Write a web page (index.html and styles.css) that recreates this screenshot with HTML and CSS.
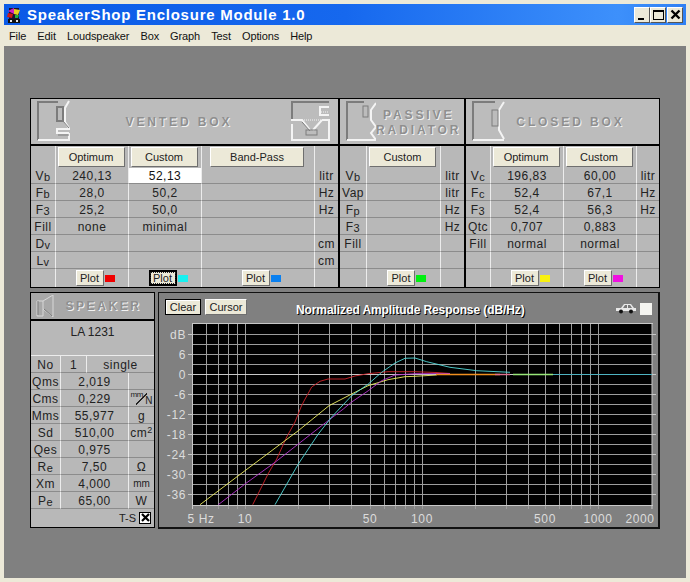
FILE: index.html
```html
<!DOCTYPE html>
<html>
<head>
    <meta charset="utf-8">
    <title>SpeakerShop Enclosure Module 1.0</title>
    <link rel="stylesheet" href="styles.css">
</head>
<body>
<div class="window">
    <div class="titlebar">
        <svg class="app-icon" width="16" height="16" viewBox="0 0 16 16">
            <rect x="3" y="1" width="10" height="11" fill="#1a1030"/>
            <path d="M2 4 L8 1 L8 7 Z" fill="#d020c0"/>
            <path d="M8 2 L14 3 L12 8 L8 7 Z" fill="#e8d020"/>
            <path d="M2 6 L7 7 L6 11 L1 10 Z" fill="#d01818"/>
            <path d="M9 8 L13 8 L12 11 L9 11 Z" fill="#20b040"/>
            <rect x="2" y="12" width="12" height="4" fill="#101010"/>
            <path d="M4 13 h2 v2 h-2 Z M10 13 h2 v2 h-2 Z" fill="#e8e8e8"/>
        </svg>
        <span class="title-text">SpeakerShop Enclosure Module 1.0</span>
        <div class="win-buttons">
            <div class="win-btn"><span class="glyph-min"></span></div>
            <div class="win-btn"><span class="glyph-max"></span></div>
            <div class="win-btn win-close">
                <svg width="11" height="11" viewBox="0 0 11 11"><path d="M1.5 1.5 L9.5 9.5 M9.5 1.5 L1.5 9.5" stroke="#000" stroke-width="2.4"/></svg>
            </div>
        </div>
    </div>
    <div class="menubar">
        <span>File</span><span>Edit</span><span>Loudspeaker</span><span>Box</span><span>Graph</span><span>Test</span><span>Options</span><span>Help</span>
    </div>

    <div class="client">
        <div class="boxes">
            <!-- vented -->
            <div class="box box-vented">
                <div class="box-head">
                    <svg class="head-icon" width="45" height="46" viewBox="0 0 45 46">
                        <path d="M7 41 V3 H27" class="ln-dark"/>
                        <path d="M7 41 H38 V34 M38 2 L34 9 V23 L38 29 V30 H26 V34 H38" class="ln-white"/>
                        <rect x="26" y="8" width="6" height="14" class="ln-dark"/>
                        <path d="M32 22 L38 29 M27 36 H38" class="ln-dark-thin"/>
                    </svg>
                    <div class="head-label label-vented">VENTED BOX</div>
                    <svg class="head-icon" width="50" height="46" viewBox="0 0 50 46">
                        <path d="M4 20 V3 H41" class="ln-dark"/>
                        <path d="M3 21 H14 L22 31 M34 21 L25 31 M34 21 H41 V41 H4 V25 M41 8 H32 V16 H41" class="ln-white"/>
                        <path d="M14 23 L22 32" class="ln-dark-thin"/>
                        <path d="M14 21 H34 M33 13 H41" class="ln-dots"/>
                        <rect x="18" y="31" width="11" height="5" class="ln-dark-thin"/>
                    </svg>
                </div>
                <div class="tbl tbl-vented">
                    <div class="c top"></div><div class="c top"><button class="btn btn-wide">Optimum</button></div><div class="c top"><button class="btn btn-wide">Custom</button></div><div class="c top"><button class="btn btn-band">Band-Pass</button></div><div class="c top"></div>
                    <div class="c">V<small>b</small></div><div class="c">240,13</div><div class="c c-input">52,13</div><div class="c"></div><div class="c">litr</div>
                    <div class="c">F<small>b</small></div><div class="c">28,0</div><div class="c">50,2</div><div class="c"></div><div class="c">Hz</div>
                    <div class="c">F<small>3</small></div><div class="c">25,2</div><div class="c">50,0</div><div class="c"></div><div class="c">Hz</div>
                    <div class="c">Fill</div><div class="c">none</div><div class="c">minimal</div><div class="c"></div><div class="c"></div>
                    <div class="c">D<small>v</small></div><div class="c"></div><div class="c"></div><div class="c"></div><div class="c">cm</div>
                    <div class="c">L<small>v</small></div><div class="c"></div><div class="c"></div><div class="c"></div><div class="c">cm</div>
                    <div class="c end"></div>
                    <div class="c end"><button class="btn btn-plot">Plot</button><span class="swatch sw-red"></span></div>
                    <div class="c end"><button class="btn btn-plot btn-focus"><span>Plot</span></button><span class="swatch sw-cyan"></span></div>
                    <div class="c end"><button class="btn btn-plot">Plot</button><span class="swatch sw-blue"></span></div>
                    <div class="c end"></div>
                </div>
            </div>

            <!-- passive radiator -->
            <div class="box box-passive">
                <div class="box-head">
                    <svg class="head-icon" width="36" height="46" viewBox="0 0 36 46">
                        <path d="M7 41 V3 H24" class="ln-dark"/>
                        <path d="M7 41 H36 L31 34 L36 28 L31 21 V11 L36 4" class="ln-white"/>
                        <rect x="23" y="7" width="5" height="11" class="ln-dark-thin"/>
                    </svg>
                    <div class="head-label head-two">PASSIVE<br>RADIATOR</div>
                </div>
                <div class="tbl tbl-passive">
                    <div class="c top"></div><div class="c top"><button class="btn btn-wide">Custom</button></div><div class="c top"></div>
                    <div class="c">V<small>b</small></div><div class="c"></div><div class="c">litr</div>
                    <div class="c">Vap</div><div class="c"></div><div class="c">litr</div>
                    <div class="c">F<small>p</small></div><div class="c"></div><div class="c">Hz</div>
                    <div class="c">F<small>3</small></div><div class="c"></div><div class="c">Hz</div>
                    <div class="c">Fill</div><div class="c"></div><div class="c"></div>
                    <div class="c"></div><div class="c"></div><div class="c"></div>
                    <div class="c end"></div>
                    <div class="c end"><button class="btn btn-plot">Plot</button><span class="swatch sw-green"></span></div>
                    <div class="c end"></div>
                </div>
            </div>

            <!-- closed -->
            <div class="box box-closed">
                <div class="box-head">
                    <svg class="head-icon" width="42" height="46" viewBox="0 0 42 46">
                        <path d="M7 41 V3 H29" class="ln-dark"/>
                        <path d="M7 41 H38 M38 3 L33 11 V31 L38 40" class="ln-white"/>
                        <rect x="26" y="11" width="6" height="16" class="ln-dark-thin"/>
                    </svg>
                    <div class="head-label label-closed">CLOSED BOX</div>
                </div>
                <div class="tbl tbl-closed">
                    <div class="c top"></div><div class="c top"><button class="btn btn-wide">Optimum</button></div><div class="c top"><button class="btn btn-wide">Custom</button></div><div class="c top"></div>
                    <div class="c">V<small>c</small></div><div class="c">196,83</div><div class="c">60,00</div><div class="c">litr</div>
                    <div class="c">F<small>c</small></div><div class="c">52,4</div><div class="c">67,1</div><div class="c">Hz</div>
                    <div class="c">F<small>3</small></div><div class="c">52,4</div><div class="c">56,3</div><div class="c">Hz</div>
                    <div class="c">Qtc</div><div class="c">0,707</div><div class="c">0,883</div><div class="c"></div>
                    <div class="c">Fill</div><div class="c">normal</div><div class="c">normal</div><div class="c"></div>
                    <div class="c"></div><div class="c"></div><div class="c"></div><div class="c"></div>
                    <div class="c end"></div>
                    <div class="c end"><button class="btn btn-plot">Plot</button><span class="swatch sw-yellow"></span></div>
                    <div class="c end"><button class="btn btn-plot">Plot</button><span class="swatch sw-magenta"></span></div>
                    <div class="c end"></div>
                </div>
            </div>
        </div>

        <div class="lower">
            <!-- speaker -->
            <div class="speaker">
                <div class="speaker-head">
                    <svg width="20" height="22" viewBox="0 0 20 22">
                        <path d="M1 6 V21 H7 V6 Z M7 6 L17 0 V22 L7 14" fill="none" stroke="#d8d8d8" stroke-width="1"/>
                        <path d="M2 6 V20 M8 14 L16 21" fill="none" stroke="#7a7a7a" stroke-width="1"/>
                    </svg>
                    <div class="head-label speaker-label">SPEAKER</div>
                </div>
                <div class="speaker-name">LA 1231</div>
                <div class="tbl sp-no">
                    <div class="c">No</div><div class="c">1</div><div class="c">single</div>
                </div>
                <div class="tbl sp-rows">
                    <div class="c">Qms</div><div class="c">2,019</div><div class="c"></div>
                    <div class="c">Cms</div><div class="c">0,229</div><div class="c c-unit"><span class="mm-n"><span class="mm-top">mm</span><span class="mm-bottom">N</span></span></div>
                    <div class="c">Mms</div><div class="c">55,977</div><div class="c">g</div>
                    <div class="c">Sd</div><div class="c">510,00</div><div class="c">cm<sup>2</sup></div>
                    <div class="c">Qes</div><div class="c">0,975</div><div class="c"></div>
                    <div class="c">R<small>e</small></div><div class="c">7,50</div><div class="c">Ω</div>
                    <div class="c">Xm</div><div class="c">4,000</div><div class="c c-unit">mm</div>
                    <div class="c">P<small>e</small></div><div class="c">65,00</div><div class="c">W</div>
                </div>
                <div class="speaker-foot">
                    <span>T-S</span>
                    <span class="check">
                        <svg width="9" height="9" viewBox="0 0 9 9"><path d="M1 1 L8 8 M8 1 L1 8" stroke="#000" stroke-width="2.2"/></svg>
                    </span>
                </div>
            </div>

            <!-- graph -->
            <div class="graph">
                <div class="graph-head">
                    <button class="btn btn-clear">Clear</button>
                    <button class="btn btn-cursor">Cursor</button>
                    <div class="graph-title">Normalized Amplitude Response (dB/Hz)</div>
                    <svg class="car" width="22" height="11" viewBox="0 0 22 11">
                        <path d="M1 5 H6 L9 1 H16 L19 5 H21 V8 H1 Z" fill="#e8e8e8"/>
                        <path d="M10 2 H12 V5 H8 Z M13 2 H15 L17 5 H13 Z" fill="#777"/>
                        <circle cx="6" cy="8.5" r="2" fill="#111"/>
                        <circle cx="16" cy="8.5" r="2" fill="#111"/>
                    </svg>
                    <div class="graph-check"></div>
                </div>
                <svg class="chart" width="499" height="205" viewBox="159 322 499 205">
                    <rect x="193" y="325" width="459" height="181" fill="#000"/>
                    <!-- horizontal grid, 10 px = 3 dB -->
                    <path class="grid" d="M193 335.5H652 M193 345.5H652 M193 355.5H652 M193 365.5H652 M193 385.5H652 M193 395.5H652 M193 405.5H652 M193 415.5H652 M193 425.5H652 M193 435.5H652 M193 445.5H652 M193 455.5H652 M193 465.5H652 M193 475.5H652 M193 485.5H652 M193 495.5H652"/>
                    <!-- vertical grid, log scale -->
                    <path class="grid" d="M206.5 325V510 M218.5 325V510 M228.5 325V510 M237.5 325V510 M245.5 325V510 M298.5 325V510 M329.5 325V510 M351.5 325V510 M370.5 325V510 M384.5 325V510 M395.5 325V510 M405.5 325V510 M414.5 325V510 M422.5 325V510 M475.5 325V510 M506.5 325V510 M528.5 325V510 M545.5 325V510 M559.5 325V510 M571.5 325V510 M581.5 325V510 M590.5 325V510 M598.5 325V510"/>
                    <path class="frame" d="M193 375.5H652 M192.5 324V510 M192 324.5H653 M192 506.5H653 M652 324V510"/>
                    <!-- scale ticks -->
                    <path class="frame" d="M188 335.5H193 M188 355.5H193 M188 375.5H193 M188 395.5H193 M188 415.5H193 M188 435.5H193 M188 455.5H193 M188 475.5H193 M188 495.5H193 M652 335.5H656 M652 355.5H656 M652 375.5H656 M652 395.5H656 M652 415.5H656 M652 435.5H656 M652 455.5H656 M652 475.5H656 M652 495.5H656"/>

                    <polyline class="curve" stroke="#d0242a" points="252.7,505.7 268,475 276.7,460 286.7,438 295,423 301,408 304,402 311.7,388 320,382.3 328,380 345,380 355,377 368,374.7 388,372.7 415,372.7 436,373.5 450,374.5"/>
                    <polyline class="curve" stroke="#eeee60" points="200,505.7 245,471.7 298.3,431.7 329,406.7 351.7,395 368,386.7 388,380.7 405,377.7 415,377.3 436.7,376"/>
                    <polyline class="curve" stroke="#b834d0" points="218.3,505.7 245,485 275,463.3 298.3,445 321.7,426.7 343.3,410 351.7,403 368.3,391.7 381.7,381.7 395,376 415,374.7 450,374.5"/>
                    <polyline class="curve" stroke="#52dada" points="275,505.7 298.3,465 318.3,435 331.7,418 351.7,396.7 368.3,385 381.7,373.3 395,364 405,359.3 415,359 426.7,362.7 450,368.3 476.7,371.7 510,373.3"/>
                    <polyline class="curve curve-flat" stroke="#f09020" points="436,375.5 500,375.5"/>
                    <polyline class="curve curve-flat" stroke="#e07090" points="495,375.5 510,375.5"/>
                    <polyline class="curve curve-flat" stroke="#98e878" points="513,375.5 553,375.5"/>
                    <polyline class="curve" stroke="#3fb0c0" points="553,375.5 652,375.5"/>

                    <g class="lbl lbl-y">
                        <text x="186" y="340">dB</text>
                        <text x="186" y="360">6</text>
                        <text x="186" y="380">0</text>
                        <text x="186" y="400">-6</text>
                        <text x="186" y="420">-12</text>
                        <text x="186" y="440">-18</text>
                        <text x="186" y="460">-24</text>
                        <text x="186" y="480">-30</text>
                        <text x="186" y="500">-36</text>
                    </g>
                    <g class="lbl lbl-x">
                        <text x="201" y="524">5 Hz</text>
                        <text x="245" y="524">10</text>
                        <text x="370" y="524">50</text>
                        <text x="422" y="524">100</text>
                        <text x="545" y="524">500</text>
                        <text x="598" y="524">1000</text>
                        <text x="640" y="524">2000</text>
                    </g>
                </svg>
            </div>
        </div>
    </div>
</div>
</body>
</html>
```

FILE: styles.css
```css
* {
    box-sizing: border-box;
}

html, body {
    margin: 0;
    height: 100%;
}

body {
    font-family: "Liberation Sans", Arial, sans-serif;
    font-size: 12px;
    color: #222;
    background: #ece9d8;
    overflow: hidden;
}

.window {
    display: flex;
    flex-direction: column;
    height: 582px;
    padding: 4px;
}

/* title bar */
.titlebar {
    display: flex;
    align-items: center;
    height: 21px;
    flex: none;
    padding-left: 2px;
    background: linear-gradient(90deg, #0a5ae6 0%, #1668ee 50%, #3d90fb 90%, #2f80f4 100%);
}

.app-icon {
    flex: none;
    margin-right: 5px;
}

.title-text {
    font-size: 15px;
    font-weight: bold;
    letter-spacing: 0.75px;
    color: #fff;
    white-space: nowrap;
}

.win-buttons {
    display: flex;
    margin-left: auto;
    margin-right: 3px;
}

.win-btn {
    display: flex;
    align-items: center;
    justify-content: center;
    width: 16px;
    height: 16px;
    background: #ece9d8;
    border: 1px solid;
    border-color: #fff #555 #555 #fff;
}

.win-close {
    margin-left: 1px;
}

.glyph-min {
    width: 6px;
    height: 2px;
    margin-top: 8px;
    margin-right: 3px;
    background: #000;
}

.glyph-max {
    width: 11px;
    height: 10px;
    border: 1px solid #000;
    border-top-width: 2px;
}

/* menu */
.menubar {
    display: flex;
    align-items: center;
    gap: 11px;
    height: 21px;
    flex: none;
    padding-left: 5px;
    font-size: 11px;
    letter-spacing: -0.1px;
    color: #111;
}

/* client */
.client {
    flex: 1;
    padding: 52px 0 0 26px;
    background: #808080;
}

.boxes {
    display: flex;
    height: 190px;
}

.box {
    height: 190px;
    border: 1px solid #000;
    background: #b8b8b8;
}

.box-vented { width: 309px; }
.box-passive { width: 126px; }
.box-closed { width: 195px; }

.box-head {
    display: flex;
    align-items: center;
    height: 47px;
    background: #bcbcbc;
    border-bottom: 2px solid #000;
}

.head-icon {
    flex: none;
    fill: none;
}

.ln-dark {
    fill: none;
    stroke: #7c7c7c;
    stroke-width: 2;
}

.ln-dark-thin {
    fill: none;
    stroke: #7c7c7c;
    stroke-width: 1;
}

.ln-white {
    fill: none;
    stroke: #f4f4f4;
    stroke-width: 2;
}

.ln-dots {
    fill: none;
    stroke: #f4f4f4;
    stroke-width: 1;
    stroke-dasharray: 1 1;
}

.head-label {
    flex: 1;
    text-align: center;
    font-size: 12px;
    font-weight: bold;
    letter-spacing: 2.9px;
    color: #8f8f8f;
    text-shadow: 1px 1px 0 #f2f2f2;
    white-space: nowrap;
}

.label-vented { padding-right: 6px; }
.label-closed { padding-right: 26px; }

.head-two {
    padding-right: 4px;
    padding-top: 2px;
    line-height: 15px;
}

/* value tables */
.tbl {
    display: grid;
    letter-spacing: 0.5px;
}

.tbl-vented,
.tbl-passive,
.tbl-closed {
    grid-template-rows: 22px 16px repeat(5, 17px) 18px;
    height: 141px;
}

.tbl-vented { grid-template-columns: 25px 73px 73px 113px 23px; }
.tbl-passive { grid-template-columns: 27px 74px 23px; }
.tbl-closed { grid-template-columns: 25px 73px 73px 22px; }

.c {
    display: flex;
    align-items: center;
    justify-content: center;
    min-width: 0;
    padding-top: 1px;
    white-space: nowrap;
    border-right: 1px solid #ececec;
    border-bottom: 1px solid #8c8c8c;
}

.c:last-child,
.tbl-vented .c:nth-child(5n),
.tbl-passive .c:nth-child(3n),
.tbl-closed .c:nth-child(4n),
.sp-no .c:nth-child(3),
.sp-rows .c:nth-child(3n) {
    border-right: none;
}

.c small {
    font-size: 11px;
    margin-top: 2px;
}

.c sup {
    font-size: 9px;
    line-height: 0;
    margin-top: -5px;
}

.top {
    align-items: flex-start;
    border-bottom: none;
}

.end {
    padding-top: 0;
    border-bottom: none;
}

.c-input {
    background: #fff;
    color: #111;
}

.c-unit {
    font-size: 10px;
    letter-spacing: 0;
}

/* mm/N unit: the stroke is a background so the two texts stay apart */
.mm-n {
    display: flex;
    justify-content: space-between;
    width: 22px;
    height: 15px;
    background: linear-gradient(to bottom right, transparent 46%, #222 46%, #222 54%, transparent 54%) 5px 2px / 11px 12px no-repeat;
}

.mm-top {
    font-size: 8px;
    line-height: 8px;
    letter-spacing: -0.3px;
}

.mm-bottom {
    align-self: flex-end;
    font-size: 10px;
    line-height: 10px;
}

/* buttons */
.btn {
    padding: 0;
    margin: 0;
    font-family: "Liberation Sans", Arial, sans-serif;
    font-size: 11px;
    color: #222;
    background: #ece9d8;
    border: 1px solid;
    border-color: #fff #6f6f6f #6f6f6f #fff;
    height: 20px;
}

.btn-wide {
    width: 67px;
    margin-right: 2px;
}

.btn-band {
    width: 94px;
    margin-right: 2px;
}

.btn-plot {
    width: 28px;
    height: 16px;
    margin-left: 6px;
}

.btn-focus {
    border: 2px solid #000;
}

.btn-focus span {
    display: block;
    line-height: 10px;
    outline: 1px dotted #222;
}

.swatch {
    flex: none;
    width: 10px;
    height: 7px;
    margin-left: 1px;
}

.sw-red { background: #f00000; }
.sw-cyan { background: #18f0f0; }
.sw-blue { background: #0a80f0; }
.sw-green { background: #00f010; }
.sw-yellow { background: #f8f010; }
.sw-magenta { background: #f010e0; }

/* speaker and graph */
.lower {
    display: flex;
    gap: 3px;
    margin-top: 4px;
}

.speaker {
    width: 125px;
    height: 236px;
    border: 1px solid #000;
    background: #b8b8b8;
}

.speaker-head {
    display: flex;
    align-items: center;
    height: 28px;
    padding-left: 5px;
    background: #a8a8a8;
    border-bottom: 2px solid #000;
}

.speaker-label {
    letter-spacing: 2.6px;
    padding-right: 3px;
}

.speaker-name {
    height: 35px;
    padding-top: 4px;
    text-align: center;
    border-bottom: 1px solid #ececec;
}

.sp-no {
    grid-template-columns: 30px 26px 67px;
    grid-auto-rows: 17px;
}

.sp-rows {
    grid-template-columns: 30px 68px 25px;
    grid-auto-rows: 17px;
}

.speaker-foot {
    display: flex;
    align-items: center;
    justify-content: flex-end;
    gap: 3px;
    height: 17px;
    padding-right: 3px;
    font-size: 11px;
}

.check {
    display: flex;
    align-items: center;
    justify-content: center;
    width: 12px;
    height: 12px;
    background: #fff;
    border: 1px solid #000;
}

.graph {
    width: 502px;
    height: 237px;
    background: #808080;
    border: 1px solid #111;
    border-right-width: 2px;
    border-bottom-width: 2px;
}

.graph-head {
    display: flex;
    align-items: flex-start;
    height: 28px;
    padding: 6px 6px 0 6px;
}

.btn-clear {
    width: 36px;
    height: 16px;
    border: 1px solid #000;
    box-shadow: inset 1px 1px 0 #fff;
}

.btn-cursor {
    width: 42px;
    height: 16px;
    margin-left: 4px;
}

.graph-title {
    flex: 1;
    padding-left: 49px;
    padding-top: 4px;
    font-size: 12px;
    font-weight: bold;
    letter-spacing: -0.1px;
    color: #fff;
    text-shadow: 1px 1px 0 #000;
    white-space: nowrap;
}

.car {
    flex: none;
    margin: 4px 3px 0 0;
}

.graph-check {
    flex: none;
    width: 12px;
    height: 12px;
    margin-top: 4px;
    background: #f4f4f0;
}

.chart {
    display: block;
}

.grid {
    fill: none;
    stroke: #9c9c9c;
    stroke-width: 1;
}

.frame {
    fill: none;
    stroke: #c8c8c8;
    stroke-width: 1;
}

.curve {
    fill: none;
    stroke-width: 0.9;
}

.curve-flat {
    stroke-width: 1.4;
}

.lbl text {
    font-family: "Liberation Sans", Arial, sans-serif;
    font-size: 12px;
    letter-spacing: 0.6px;
    fill: #dcdcdc;
}

.lbl-y text {
    text-anchor: end;
}

.lbl-x text {
    text-anchor: middle;
}
```
